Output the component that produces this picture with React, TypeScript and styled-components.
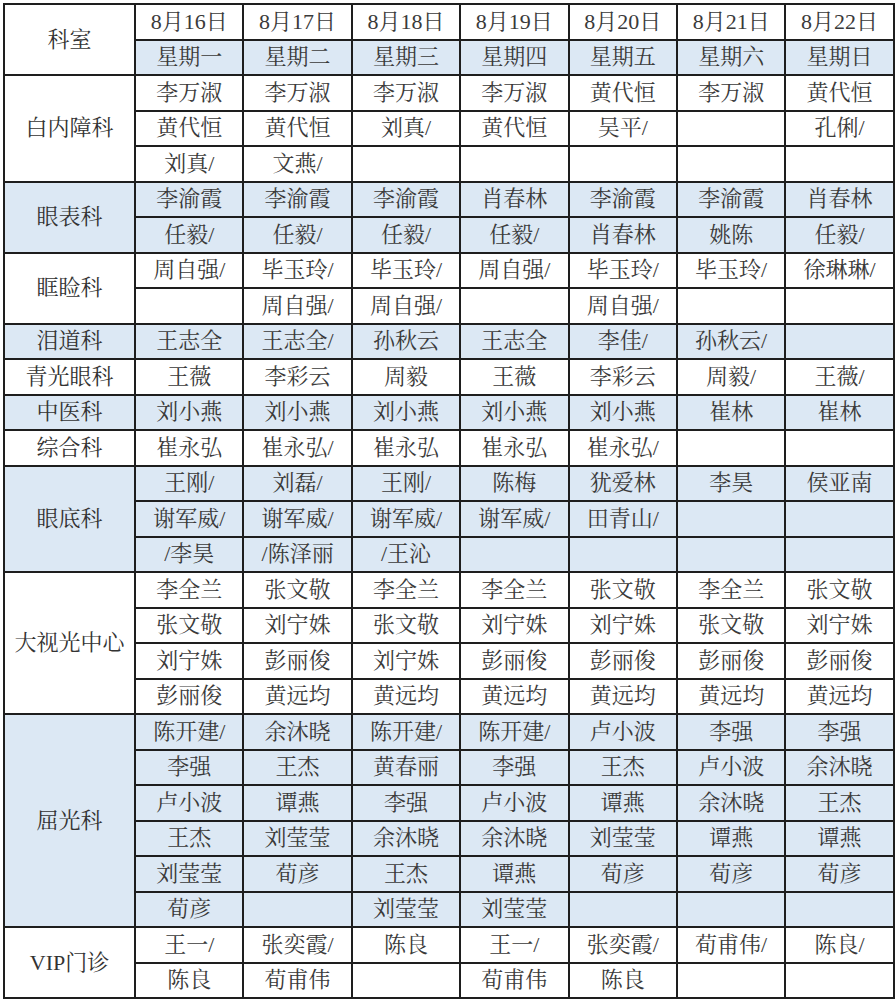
import styled, { createGlobalStyle } from "styled-components";

const GlobalStyle = createGlobalStyle`
  html, body {
    margin: 0;
    padding: 0;
    background: #ffffff;
  }
  body {
    padding: 3px 0 0 3px;
    font-family: "Liberation Serif", "Noto Serif CJK SC", "Noto Sans CJK SC", serif;
  }
`;

interface Dept {
	name: string;
	shaded: boolean;
	rows: string[][];
}

const dates = ["8月16日", "8月17日", "8月18日", "8月19日", "8月20日", "8月21日", "8月22日"];
const weekdays = ["星期一", "星期二", "星期三", "星期四", "星期五", "星期六", "星期日"];

const depts: Dept[] = [
	{
		name: "白内障科",
		shaded: false,
		rows: [
			["李万淑", "李万淑", "李万淑", "李万淑", "黄代恒", "李万淑", "黄代恒"],
			["黄代恒", "黄代恒", "刘真/", "黄代恒", "吴平/", "", "孔俐/"],
			["刘真/", "文燕/", "", "", "", "", ""],
		],
	},
	{
		name: "眼表科",
		shaded: true,
		rows: [
			["李渝霞", "李渝霞", "李渝霞", "肖春林", "李渝霞", "李渝霞", "肖春林"],
			["任毅/", "任毅/", "任毅/", "任毅/", "肖春林", "姚陈", "任毅/"],
		],
	},
	{
		name: "眶睑科",
		shaded: false,
		rows: [
			["周自强/", "毕玉玲/", "毕玉玲/", "周自强/", "毕玉玲/", "毕玉玲/", "徐琳琳/"],
			["", "周自强/", "周自强/", "", "周自强/", "", ""],
		],
	},
	{
		name: "泪道科",
		shaded: true,
		rows: [["王志全", "王志全/", "孙秋云", "王志全", "李佳/", "孙秋云/", ""]],
	},
	{
		name: "青光眼科",
		shaded: false,
		rows: [["王薇", "李彩云", "周毅", "王薇", "李彩云", "周毅/", "王薇/"]],
	},
	{
		name: "中医科",
		shaded: true,
		rows: [["刘小燕", "刘小燕", "刘小燕", "刘小燕", "刘小燕", "崔林", "崔林"]],
	},
	{
		name: "综合科",
		shaded: false,
		rows: [["崔永弘", "崔永弘/", "崔永弘", "崔永弘", "崔永弘/", "", ""]],
	},
	{
		name: "眼底科",
		shaded: true,
		rows: [
			["王刚/", "刘磊/", "王刚/", "陈梅", "犹爱林", "李昊", "侯亚南"],
			["谢军威/", "谢军威/", "谢军威/", "谢军威/", "田青山/", "", ""],
			["/李昊", "/陈泽丽", "/王沁", "", "", "", ""],
		],
	},
	{
		name: "大视光中心",
		shaded: false,
		rows: [
			["李全兰", "张文敬", "李全兰", "李全兰", "张文敬", "李全兰", "张文敬"],
			["张文敬", "刘宁姝", "张文敬", "刘宁姝", "刘宁姝", "张文敬", "刘宁姝"],
			["刘宁姝", "彭丽俊", "刘宁姝", "彭丽俊", "彭丽俊", "彭丽俊", "彭丽俊"],
			["彭丽俊", "黄远均", "黄远均", "黄远均", "黄远均", "黄远均", "黄远均"],
		],
	},
	{
		name: "屈光科",
		shaded: true,
		rows: [
			["陈开建/", "余沐晓", "陈开建/", "陈开建/", "卢小波", "李强", "李强"],
			["李强", "王杰", "黄春丽", "李强", "王杰", "卢小波", "余沐晓"],
			["卢小波", "谭燕", "李强", "卢小波", "谭燕", "余沐晓", "王杰"],
			["王杰", "刘莹莹", "余沐晓", "余沐晓", "刘莹莹", "谭燕", "谭燕"],
			["刘莹莹", "荀彦", "王杰", "谭燕", "荀彦", "荀彦", "荀彦"],
			["荀彦", "", "刘莹莹", "刘莹莹", "", "", ""],
		],
	},
	{
		name: "VIP门诊",
		shaded: false,
		rows: [
			["王一/", "张奕霞/", "陈良", "王一/", "张奕霞/", "荀甫伟/", "陈良/"],
			["陈良", "荀甫伟", "", "荀甫伟", "陈良", "", ""],
		],
	},
];

const ScheduleTable = styled.table`
  border-collapse: collapse;
  table-layout: fixed;
  width: 890px;
`;

const DeptCol = styled.col`
  width: 131px;
`;

const DayCol = styled.col`
  width: 108.4px;
`;

const Cell = styled.td<{ $shaded: boolean }>`
  height: 35.5px;
  padding: 0;
  border: 2px solid #1e1e1e;
  background: ${({ $shaded }) => ($shaded ? "#dce8f4" : "#ffffff")};
  color: #3a3a3a;
  font-size: 22px;
  line-height: 1;
  text-align: center;
  vertical-align: middle;
  white-space: nowrap;
  box-sizing: border-box;
`;

const DeptCell = styled(Cell)`
  color: #333333;
`;

export default function App() {
	return (
		<>
			<GlobalStyle />
			<ScheduleTable>
				<colgroup>
					<DeptCol />
					{dates.map((d) => (
						<DayCol key={d} />
					))}
				</colgroup>
				<tbody>
					<tr>
						<DeptCell $shaded={false} rowSpan={2}>
							科室
						</DeptCell>
						{dates.map((d) => (
							<Cell key={d} $shaded={false}>
								{d}
							</Cell>
						))}
					</tr>
					<tr>
						{weekdays.map((w) => (
							<Cell key={w} $shaded>
								{w}
							</Cell>
						))}
					</tr>
					{depts.map((dept) =>
						dept.rows.map((row, i) => (
							<tr key={`${dept.name}-${i}`}>
								{i === 0 && (
									<DeptCell $shaded={dept.shaded} rowSpan={dept.rows.length}>
										{dept.name}
									</DeptCell>
								)}
								{row.map((name, j) => (
									<Cell key={j} $shaded={dept.shaded}>
										{name}
									</Cell>
								))}
							</tr>
						)),
					)}
				</tbody>
			</ScheduleTable>
		</>
	);
}
